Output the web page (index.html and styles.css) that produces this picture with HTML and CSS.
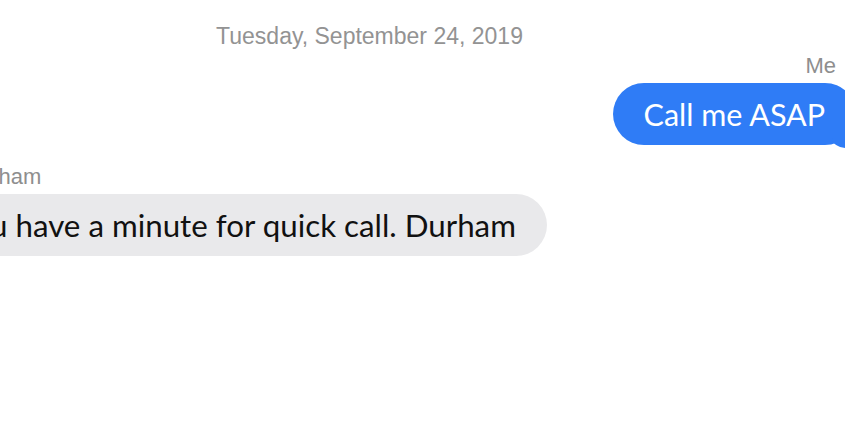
FILE: index.html
```html
<!DOCTYPE html>
<html lang="en">
<head>
<meta charset="utf-8">
<title>Messages</title>
<link rel="stylesheet" href="styles.css">
</head>
<body>
<div class="thread">
  <div class="date">Tuesday, September 24, 2019</div>
  <div class="msg sent">
    <div class="sender">Me</div>
    <div class="bubble blue">Call me ASAP</div>
  </div>
  <div class="msg received">
    <div class="sender">Durham</div>
    <div class="bubble gray">Do you have a minute for quick call. Durham</div>
  </div>
</div>
</body>
</html>
```

FILE: styles.css
```css
html, body {
  margin: 0;
  padding: 0;
  background: #ffffff;
}
.thread {
  width: 845px;
  height: 430px;
  overflow: hidden;
  display: flex;
  flex-direction: column;
  font-family: "Liberation Sans", Arial, sans-serif;
}
.date {
  margin-top: 23px;
  padding-right: 106px;
  text-align: center;
  font-size: 23px;
  line-height: 26px;
  color: #939393;
}
.msg {
  display: flex;
  flex-direction: column;
}
.sent {
  align-items: flex-end;
  margin-top: 6px;
  margin-right: -11px;
}
.sent .sender {
  margin-right: 20px;
}
.received {
  align-items: flex-start;
  margin-top: 21px;
  margin-left: -123px;
}
.received .sender {
  margin-left: 86px;
}
.sender {
  font-size: 22px;
  line-height: 22px;
  color: #8e8e8e;
}
.bubble {
  position: relative;
  font-family: Lato, "Open Sans", sans-serif;
  font-size: 30.5px;
  line-height: 62px;
  height: 62px;
  border-radius: 31px;
  padding: 0 31px;
  white-space: nowrap;
}
.blue {
  margin-top: 6px;
  background: #2f7cf6;
  color: #ffffff;
}
.blue::after {
  content: "";
  position: absolute;
  right: 6px;
  bottom: -3px;
  width: 18px;
  height: 16px;
  background: #2f7cf6;
  border-bottom-left-radius: 14px 10px;
}
.gray {
  margin-top: 6px;
  background: #e9e9eb;
  color: #111111;
  font-size: 31.3px;
}
```
